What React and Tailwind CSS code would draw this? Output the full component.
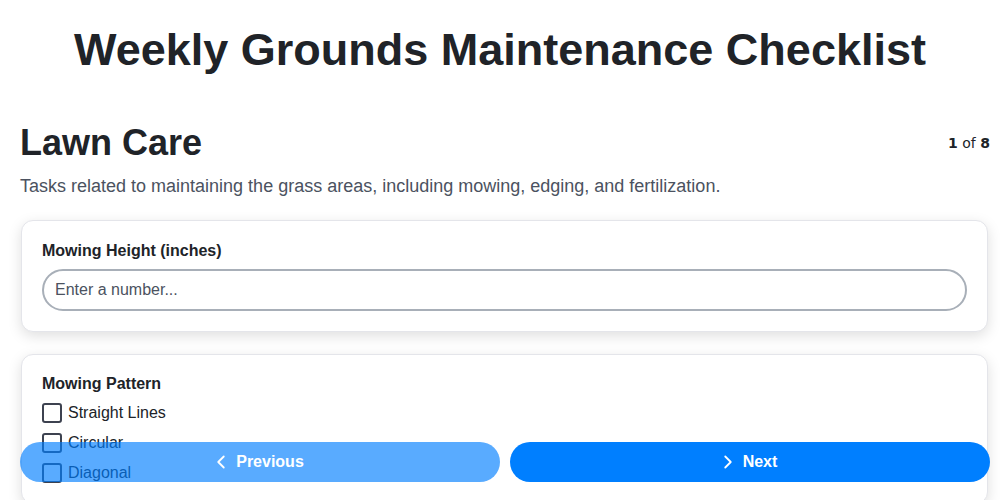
import React from "react";
import { ChevronLeft, ChevronRight } from "lucide-react";

const patterns = ["Straight Lines", "Circular", "Diagonal"];

export default function App() {
  return (
    <div className="h-screen overflow-hidden bg-white font-['Liberation_Sans',Arial,sans-serif] text-[#1f2328]">
      <h1 className="pt-[23px] text-center text-[45px] font-bold leading-[54px] text-[#202328]">
        Weekly Grounds Maintenance Checklist
      </h1>
      <div className="pl-5 pr-[10px] pt-[44px] pb-24">
        <div className="flex items-center justify-between">
          <h2 className="text-[36px] font-bold leading-[44px] text-[#202328]">
            Lawn Care
          </h2>
          <div className="font-['DejaVu_Sans',sans-serif] text-[14px] text-[#202328]">
            <span className="font-bold">1</span> of <span className="font-bold">8</span>
          </div>
        </div>
        <p className="mt-[9px] text-[18px] leading-6 text-[#4b5260]">
          Tasks related to maintaining the grass areas, including mowing, edging, and fertilization.
        </p>

        <div className="mt-[22px] ml-px mr-[2px] rounded-xl border border-[#e4e5ea] bg-white p-5 shadow-[0_4px_14px_rgba(0,0,0,0.13)]">
          <label className="block text-[16px] font-bold leading-5 text-[#202328]">
            Mowing Height (inches)
          </label>
          <input
            type="number"
            placeholder="Enter a number..."
            className="mt-2 h-[42px] w-full rounded-full border-2 border-[#a8afb8] px-[11px] text-[16px] text-[#202328] placeholder:text-[#4b5260] outline-none"
          />
        </div>

        <div className="mt-[22px] ml-px mr-[2px] rounded-xl border border-[#e4e5ea] bg-white p-5 pt-[19px] shadow-[0_4px_14px_rgba(0,0,0,0.13)]">
          <div className="text-[16px] font-bold leading-5 text-[#202328]">Mowing Pattern</div>
          <div className="mt-[9px] flex flex-col gap-[10px]">
            {patterns.map((p) => (
              <label key={p} className="flex items-center gap-[6px] text-[16px] leading-5 text-[#202328]">
                <span className="h-5 w-5 rounded-[3px] border-2 border-[#3d4250] bg-white" />
                {p}
              </label>
            ))}
          </div>
        </div>
      </div>

      <div className="fixed inset-x-0 bottom-[18px] flex gap-[10px] pl-5 pr-[10px]">
        <button className="flex h-10 flex-1 items-center justify-center gap-1 rounded-full bg-[#007fff] pr-[6px] text-[16px] font-bold text-white opacity-65">
          <ChevronLeft size={22} strokeWidth={2} />
          Previous
        </button>
        <button className="flex h-10 flex-1 items-center justify-center gap-1 rounded-full bg-[#007fff] pr-[6px] text-[16px] font-bold text-white">
          <ChevronRight size={22} strokeWidth={2} />
          Next
        </button>
      </div>
    </div>
  );
}
